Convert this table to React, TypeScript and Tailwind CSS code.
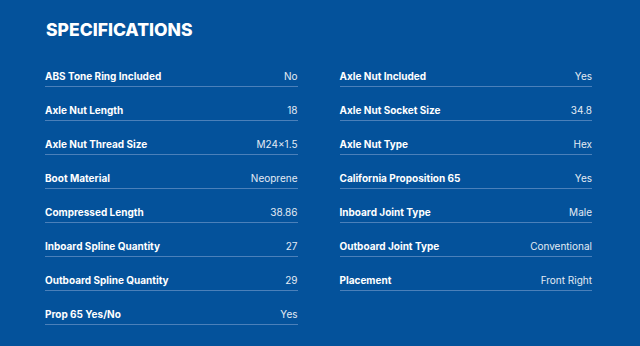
const left: [string, string][] = [
  ['ABS Tone Ring Included', 'No'],
  ['Axle Nut Length', '18'],
  ['Axle Nut Thread Size', 'M24×1.5'],
  ['Boot Material', 'Neoprene'],
  ['Compressed Length', '38.86'],
  ['Inboard Spline Quantity', '27'],
  ['Outboard Spline Quantity', '29'],
  ['Prop 65 Yes/No', 'Yes'],
]

const right: [string, string][] = [
  ['Axle Nut Included', 'Yes'],
  ['Axle Nut Socket Size', '34.8'],
  ['Axle Nut Type', 'Hex'],
  ['California Proposition 65', 'Yes'],
  ['Inboard Joint Type', 'Male'],
  ['Outboard Joint Type', 'Conventional'],
  ['Placement', 'Front Right'],
]

function SpecRow({ label, value }: { label: string; value: string }) {
  return (
    <div className="flex items-center justify-between pt-4 pb-[3px] border-b border-[#4b80ba] text-[10px] leading-[14px]">
      <span className="font-bold text-white">{label}</span>
      <span className="text-[#e3ebf4]">{value}</span>
    </div>
  )
}

export default function App() {
  return (
    <div
      className="w-[640px] h-[346px] bg-[#04529b] pl-[45px] pr-[48px] pt-[18px] overflow-hidden"
      style={{ fontFamily: 'Inter, "Open Sans", sans-serif' }}
    >
      <h2 className="pl-[1px] text-[17.5px] leading-[23px] font-extrabold text-white">SPECIFICATIONS</h2>

      <div className="mt-3 grid grid-cols-2 gap-x-[42px]">
        <div className="flex flex-col">
          {left.map(([l, v]) => <SpecRow key={l} label={l} value={v} />)}
        </div>
        <div className="flex flex-col">
          {right.map(([l, v]) => <SpecRow key={l} label={l} value={v} />)}
        </div>
      </div>
    </div>
  )
}
